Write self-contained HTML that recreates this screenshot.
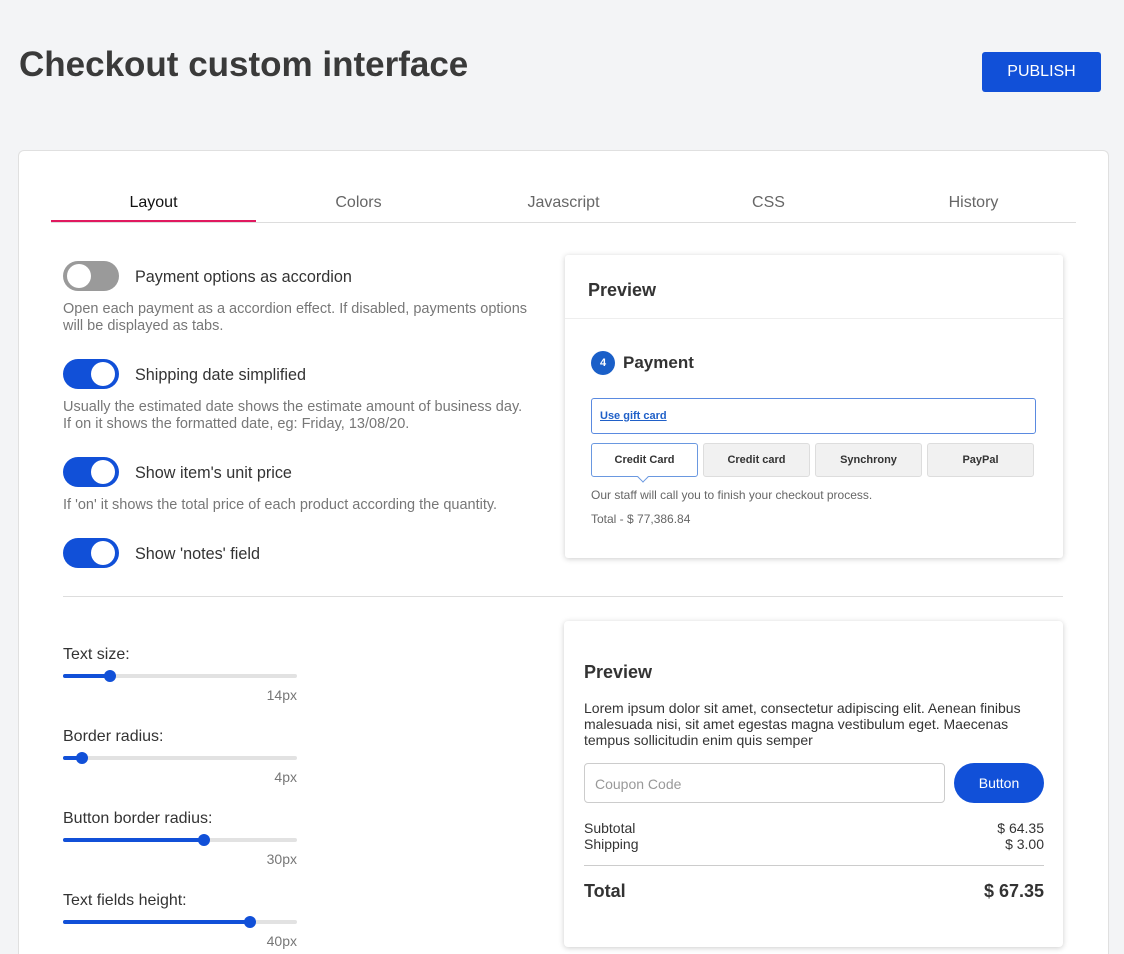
<!DOCTYPE html>
<html><head><style>
*{box-sizing:border-box;margin:0;padding:0}
html,body{width:1124px;height:954px;overflow:hidden}
body{background:#f3f4f6;font-family:"Liberation Sans",sans-serif;color:#333;position:relative}
.a{position:absolute;white-space:nowrap}
.tog{position:absolute;left:63px;width:56px;height:30px;border-radius:15px;background:#1150d8}
.tog::after{content:"";position:absolute;top:3px;right:4px;width:24px;height:24px;border-radius:50%;background:#fff}
.tog.off{background:#9a9a9a}.tog.off::after{left:4px;right:auto}
.lbl{position:absolute;left:135px;font-size:16.2px;color:#333}
.desc{position:absolute;left:63px;font-size:14.5px;color:#777;line-height:17px}
.trk{position:absolute;left:63px;width:234px;height:4px;border-radius:2px;background:#e2e2e2}
.trk i{position:absolute;left:0;top:0;height:4px;background:#1150d8;border-radius:2px}
.trk b{position:absolute;top:-4px;width:12px;height:12px;border-radius:50%;background:#1150d8}
.sl{position:absolute;left:63px;font-size:16px;color:#333}
.sv{position:absolute;left:197px;width:100px;text-align:right;font-size:14px;color:#777}
.pt{position:absolute;top:443px;width:107px;height:34px;border:1px solid #ddd;background:#f1f1f1;border-radius:3px;font-size:11px;font-weight:bold;text-align:center;line-height:33px;color:#333}
</style></head><body>
<div class="a" style="left:19px;top:45px;font-size:35px;font-weight:bold;color:#3a3a3a">Checkout custom interface</div>
<div class="a" style="left:982px;top:52px;width:119px;height:40px;background:#1150d8;color:#fff;border-radius:3px;text-align:center;line-height:40px;font-size:16px">PUBLISH</div>
<div class="a" style="left:18px;top:150px;width:1091px;height:804px;background:#fff;border:1px solid #e0e0e0;border-bottom:none;border-radius:6px 6px 0 0"></div>
<div class="a" style="left:51px;top:222px;width:1025px;height:1px;background:#ddd"></div>
<div class="a" style="left:51px;top:220px;width:205px;height:2px;background:#e0195f"></div>
<div class="a" style="left:51px;top:194px;width:205px;text-align:center;font-size:16px;color:#111">Layout</div>
<div class="a" style="left:256px;top:194px;width:205px;text-align:center;font-size:16px;color:#666">Colors</div>
<div class="a" style="left:461px;top:194px;width:205px;text-align:center;font-size:16px;color:#666">Javascript</div>
<div class="a" style="left:666px;top:194px;width:205px;text-align:center;font-size:16px;color:#666">CSS</div>
<div class="a" style="left:871px;top:194px;width:205px;text-align:center;font-size:16px;color:#666">History</div>

<div class="tog off" style="top:261px"></div><div class="lbl" style="top:268px">Payment options as accordion</div>
<div class="desc" style="top:301px">Open each payment as a accordion effect. If disabled, payments options<br>will be displayed as tabs.</div>
<div class="tog" style="top:359px"></div><div class="lbl" style="top:366px">Shipping date simplified</div>
<div class="desc" style="top:399px">Usually the estimated date shows the estimate amount of business day.<br>If on it shows the formatted date, eg: Friday, 13/08/20.</div>
<div class="tog" style="top:457px"></div><div class="lbl" style="top:464px">Show item's unit price</div>
<div class="desc" style="top:497px">If 'on' it shows the total price of each product according the quantity.</div>
<div class="tog" style="top:538px"></div><div class="lbl" style="top:545px">Show 'notes' field</div>

<div class="a" style="left:63px;top:596px;width:1000px;height:1px;background:#ddd"></div>

<div class="sl" style="top:646px">Text size:</div>
<div class="trk" style="top:674px"><i style="width:47px"></i><b style="left:41px"></b></div>
<div class="sv" style="top:687px">14px</div>
<div class="sl" style="top:728px">Border radius:</div>
<div class="trk" style="top:756px"><i style="width:19px"></i><b style="left:13px"></b></div>
<div class="sv" style="top:769px">4px</div>
<div class="sl" style="top:810px">Button border radius:</div>
<div class="trk" style="top:838px"><i style="width:141px"></i><b style="left:135px"></b></div>
<div class="sv" style="top:851px">30px</div>
<div class="sl" style="top:892px">Text fields height:</div>
<div class="trk" style="top:920px"><i style="width:187px"></i><b style="left:181px"></b></div>
<div class="sv" style="top:933px">40px</div>

<div class="a" style="left:565px;top:255px;width:498px;height:303px;background:#fff;box-shadow:0 1px 6px rgba(0,0,0,.2);border-radius:3px"></div>
<div class="a" style="left:565px;top:318px;width:498px;height:1px;background:#eee"></div>
<div class="a" style="left:588px;top:280px;font-size:18px;font-weight:bold;color:#333">Preview</div>
<div class="a" style="left:591px;top:351px;width:24px;height:24px;border-radius:50%;background:#1a5fc8;color:#fff;font-size:11px;font-weight:bold;text-align:center;line-height:24px">4</div>
<div class="a" style="left:623px;top:353px;font-size:17px;font-weight:bold;color:#333">Payment</div>
<div class="a" style="left:591px;top:398px;width:445px;height:36px;border:1px solid #5a8ae0;border-radius:3px"></div>
<div class="a" style="left:600px;top:410px;font-size:11px;font-weight:bold;color:#2060c8;text-decoration:underline">Use gift card</div>
<div class="pt" style="left:591px;background:#fff;border-color:#6a98e0">Credit Card</div>
<div class="a" style="left:639px;top:473px;width:8px;height:8px;background:#fff;border-right:1px solid #6a98e0;border-bottom:1px solid #6a98e0;transform:rotate(45deg)"></div>
<div class="pt" style="left:703px">Credit card</div>
<div class="pt" style="left:815px">Synchrony</div>
<div class="pt" style="left:927px">PayPal</div>
<div class="a" style="left:591px;top:488px;font-size:12px;color:#666">Our staff will call you to finish your checkout process.</div>
<div class="a" style="left:591px;top:512px;font-size:12px;color:#666">Total - $ 77,386.84</div>

<div class="a" style="left:564px;top:621px;width:499px;height:326px;background:#fff;box-shadow:0 1px 6px rgba(0,0,0,.2);border-radius:4px"></div>
<div class="a" style="left:584px;top:662px;font-size:18px;font-weight:bold;color:#333">Preview</div>
<div class="a" style="left:584px;top:700px;font-size:14px;line-height:16px;color:#333">Lorem ipsum dolor sit amet, consectetur adipiscing elit. Aenean finibus<br>malesuada nisi, sit amet egestas magna vestibulum eget. Maecenas<br>tempus sollicitudin enim quis semper</div>
<div class="a" style="left:584px;top:763px;width:361px;height:40px;border:1px solid #ccc;border-radius:4px"></div>
<div class="a" style="left:595px;top:776px;font-size:14px;color:#999">Coupon Code</div>
<div class="a" style="left:954px;top:763px;width:90px;height:40px;border-radius:20px;background:#1150d8;color:#fff;font-size:14px;text-align:center;line-height:40px">Button</div>
<div class="a" style="left:584px;top:820px;font-size:14px;line-height:16px;color:#333">Subtotal<br>Shipping</div>
<div class="a" style="left:944px;top:820px;width:100px;text-align:right;font-size:14px;line-height:16px;color:#333">$ 64.35<br>$ 3.00</div>
<div class="a" style="left:584px;top:865px;width:460px;height:1px;background:#ccc"></div>
<div class="a" style="left:584px;top:881px;font-size:18px;font-weight:bold;color:#333">Total</div>
<div class="a" style="left:904px;top:881px;width:140px;text-align:right;font-size:18px;font-weight:bold;color:#333">$ 67.35</div>
</body></html>
